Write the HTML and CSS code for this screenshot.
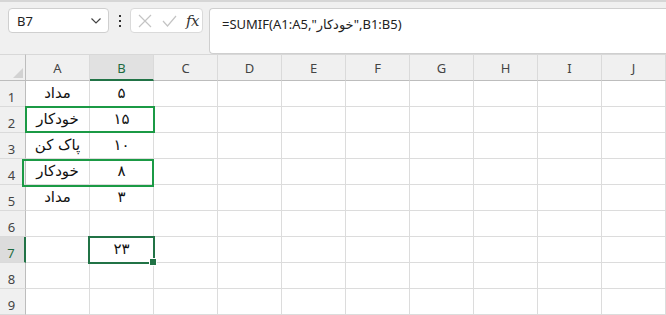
FILE: index.html
```html
<!DOCTYPE html>
<html lang="fa">
<head>
<meta charset="utf-8">
<link rel="stylesheet" href="styles.css">
</head>
<body>
<div class="app">
  <div class="topstrip"></div>
  <div class="toolbar">
    <div class="namebox">
      <span class="name">B7</span>
      <svg class="chev" width="10" height="6" viewBox="0 0 10 6"><path d="M0.5 0.5 L5 5 L9.5 0.5" fill="none" stroke="#444" stroke-width="1.2"/></svg>
    </div>
    <div class="dots"><i></i><i></i><i></i></div>
    <div class="fxbox">
      <svg width="14" height="14" viewBox="0 0 14 14"><path d="M1 1 L13 13 M13 1 L1 13" stroke="#c4c4c4" stroke-width="1.2" fill="none"/></svg>
      <svg width="15" height="12" viewBox="0 0 15 12"><path d="M1 6 L5.5 11 L14 1" stroke="#c4c4c4" stroke-width="1.2" fill="none"/></svg>
      <span class="fx">fx</span>
    </div>
    <div class="formula" dir="ltr">=SUMIF(A1:A5,"خودکار",B1:B5)</div>
  </div>
  <div class="sheet">
    <div class="grid">
      <div class="corner"><span class="tri"></span></div>
      <div class="ch">A</div><div class="ch sel">B</div><div class="ch">C</div><div class="ch">D</div><div class="ch">E</div><div class="ch">F</div><div class="ch">G</div><div class="ch">H</div><div class="ch">I</div><div class="ch">J</div>

      <div class="rh">1</div><div class="c">مداد</div><div class="c">۵</div><div class="c"></div><div class="c"></div><div class="c"></div><div class="c"></div><div class="c"></div><div class="c"></div><div class="c"></div><div class="c"></div>
      <div class="rh">2</div><div class="c">خودکار</div><div class="c">۱۵</div><div class="c"></div><div class="c"></div><div class="c"></div><div class="c"></div><div class="c"></div><div class="c"></div><div class="c"></div><div class="c"></div>
      <div class="rh">3</div><div class="c">پاک کن</div><div class="c">۱۰</div><div class="c"></div><div class="c"></div><div class="c"></div><div class="c"></div><div class="c"></div><div class="c"></div><div class="c"></div><div class="c"></div>
      <div class="rh">4</div><div class="c">خودکار</div><div class="c">۸</div><div class="c"></div><div class="c"></div><div class="c"></div><div class="c"></div><div class="c"></div><div class="c"></div><div class="c"></div><div class="c"></div>
      <div class="rh">5</div><div class="c">مداد</div><div class="c">۳</div><div class="c"></div><div class="c"></div><div class="c"></div><div class="c"></div><div class="c"></div><div class="c"></div><div class="c"></div><div class="c"></div>
      <div class="rh">6</div><div class="c"></div><div class="c"></div><div class="c"></div><div class="c"></div><div class="c"></div><div class="c"></div><div class="c"></div><div class="c"></div><div class="c"></div><div class="c"></div>
      <div class="rh sel">7</div><div class="c"></div><div class="c">۲۳</div><div class="c"></div><div class="c"></div><div class="c"></div><div class="c"></div><div class="c"></div><div class="c"></div><div class="c"></div><div class="c"></div>
      <div class="rh">8</div><div class="c"></div><div class="c"></div><div class="c"></div><div class="c"></div><div class="c"></div><div class="c"></div><div class="c"></div><div class="c"></div><div class="c"></div><div class="c"></div>
      <div class="rh">9</div><div class="c"></div><div class="c"></div><div class="c"></div><div class="c"></div><div class="c"></div><div class="c"></div><div class="c"></div><div class="c"></div><div class="c"></div><div class="c"></div>
    </div>
    <div class="mark mark-r2"></div>
    <div class="mark mark-r4"></div>
    <div class="active"><span class="handle"></span></div>
  </div>
</div>
</body>
</html>
```
FILE: styles.css
```css
* { box-sizing: border-box; }
html, body { margin: 0; padding: 0; }
body {
  width: 666px; height: 315px; overflow: hidden;
  background: #f0f0f0;
  font-family: "Noto Sans", "DejaVu Sans", sans-serif;
  color: #222;
}
.app { display: flex; flex-direction: column; height: 315px; overflow: hidden; }
.topstrip { height: 2px; background: #d6d6d6; flex: none; }
.toolbar {
  display: flex; align-items: flex-start;
  padding: 6px 0 0 8px; height: 52px; flex: none;
}
.namebox {
  width: 101px; height: 25px; background: #fff;
  border: 1px solid #cfcfcf; border-radius: 4px;
  display: flex; align-items: center; justify-content: space-between;
  padding: 0 7px 0 8px;
}
.name { font-size: 13px; color: #222; }
.chev { margin-top: 1px; }
.dots {
  width: 21px; height: 25px; display: flex; flex-direction: column;
  align-items: center; justify-content: center; gap: 3px;
}
.dots i { width: 2px; height: 2px; background: #333; display: block; }
.fxbox {
  width: 73px; height: 25px; background: #fff;
  border: 1px solid #dadada; border-radius: 4px;
  display: flex; align-items: center; gap: 10px; padding: 0 0 0 7px;
}
.fx {
  font-family: "DejaVu Serif", "Liberation Serif", serif; font-style: italic;
  font-size: 15px; color: #333; margin-left: -1px; letter-spacing: -0.5px;
}
.formula {
  margin-left: 6px; flex: 1; height: 46px; background: #fff;
  border: 1px solid #cfcfcf; border-right: none; border-radius: 4px 0 0 4px;
  padding: 6px 0 0 12px; font-size: 13px; color: #222;
  font-family: "Noto Sans", "DejaVu Sans", sans-serif;
}
.sheet { position: relative; flex: none; }
.grid {
  display: grid;
  grid-template-columns: 26px repeat(10, 64px);
  grid-template-rows: 27px repeat(9, 26px);
  background: #fff;
}
.corner {
  background: #f0f0f0; border-top: 1px solid #d8d8d8;
  border-right: 1px solid #bdbdbd; border-bottom: 1px solid #bdbdbd;
  position: relative;
}
.tri {
  position: absolute; right: 2px; bottom: 2px;
  width: 0; height: 0; border-left: 10px solid transparent; border-bottom: 10px solid #d2d2d2;
}
.ch {
  background: #f0f0f0; border-top: 1px solid #d8d8d8;
  border-right: 1px solid #dadada; border-bottom: 1px solid #bdbdbd;
  display: flex; align-items: center; justify-content: center;
  font-size: 13px; color: #444; padding-top: 1px;
}
.ch.sel { background: #e1e1e1; color: #1d6b40; border-bottom: 2px solid #217346; }
.rh {
  background: #f0f0f0; border-right: 1px solid #bdbdbd; border-bottom: 1px solid #dadada;
  display: flex; align-items: flex-end; justify-content: center;
  font-size: 13px; color: #444; padding: 0 2px 0 0;
}
.rh.sel { background: #dcdcdc; color: #1d6b40; border-right: 2px solid #217346; }
.c {
  border-right: 1px solid #dcdcdc; border-bottom: 1px solid #dcdcdc;
  display: flex; align-items: center; justify-content: center;
  font-family: "DejaVu Sans", sans-serif; font-size: 15px; color: #111;
  direction: rtl; padding-bottom: 1px;
}
.mark { position: absolute; border: 2px solid #1b9a45; pointer-events: none; }
.mark-r2 { left: 25px; top: 52px; width: 130px; height: 27px; }
.mark-r4 { left: 22px; top: 105px; width: 132px; height: 28px; }
.active {
  position: absolute; left: 88px; top: 182px; width: 67px; height: 28px;
  border: 2px solid #217346;
}
.handle {
  position: absolute; right: -4px; bottom: -4px; width: 6px; height: 6px;
  background: #217346; border: 1px solid #fff; box-sizing: content-box;
}
```
